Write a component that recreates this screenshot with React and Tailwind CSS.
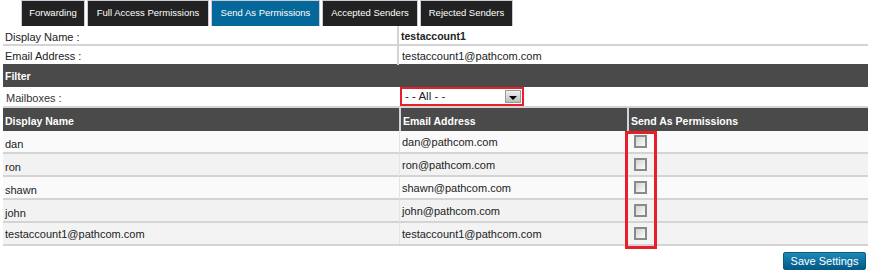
import React from "react";

const tabs = [
  { label: "Forwarding", w: "w-[64px]" },
  { label: "Full Access Permissions", w: "w-[122px]" },
  { label: "Send As Permissions", w: "w-[109px]", active: true },
  { label: "Accepted Senders", w: "w-[96px]" },
  { label: "Rejected Senders", w: "w-[93px]" },
];

const users = [
  { name: "dan", email: "dan@pathcom.com", bg: "bg-[#fafafa]" },
  { name: "ron", email: "ron@pathcom.com", bg: "bg-[#f2f2f2]" },
  { name: "shawn", email: "shawn@pathcom.com", bg: "bg-[#fafafa]" },
  { name: "john", email: "john@pathcom.com", bg: "bg-[#f2f2f2]" },
  { name: "testaccount1@pathcom.com", email: "testaccount1@pathcom.com", bg: "bg-[#f3f3f3]" },
];

const Checkbox = () => (
  <div className="w-[13px] h-[13px] border-2 border-[#8a8a8a] bg-gradient-to-br from-[#d4d4d4] to-[#fbfbfb]" />
);

export default function App() {
  return (
    <div className="w-[870px] h-[272px] bg-white font-['Liberation_Sans',Arial,sans-serif] text-[11px] text-[#222] overflow-hidden">
      {/* tabs */}
      <div className="flex gap-[2px] pl-[21px] h-[26px]">
        {tabs.map((t) => (
          <div
            key={t.label}
            className={`${t.w} h-[26px] border border-[#cfc8d6] border-b-0 flex justify-center pt-[5px] text-white text-[9.5px] ${
              t.active ? "bg-[#05689a]" : "bg-[#222222]"
            }`}
          >
            {t.label}
          </div>
        ))}
      </div>

      <div className="ml-[3px] w-[865px]">
        {/* account info */}
        <div className="grid grid-cols-[396px_1fr] h-[20px] border-b-2 border-[#d4d4d4]">
          <div className="pl-[2px] pt-[3px] border-r-2 border-[#d4d4d4]">Display Name :</div>
          <div className="pl-[2px] pt-[3px] font-bold text-[10.5px]">testaccount1</div>
        </div>
        <div className="grid grid-cols-[396px_1fr] h-[18px]">
          <div className="pl-[2px] pt-[2px] border-r-2 border-[#d4d4d4]">Email Address :</div>
          <div className="pl-[3px] pt-[2px]">testaccount1@pathcom.com</div>
        </div>

        {/* filter */}
        <div className="h-[23px] bg-[#4a4a4a] text-white font-bold text-[10.5px] pl-[2px] pt-[5px]">Filter</div>
        <div className="grid grid-cols-[396px_1fr] h-[21px] border-b-2 border-[#d4d4d4]">
          <div className="pl-[3px] pt-[3px] text-[#333]">Mailboxes :</div>
          <div className="pl-[1px]">
            <div className="w-[124px] h-[19px] border-2 border-[#e81f2a] bg-white flex items-center justify-between pl-[3px] pr-[1px]">
              <span className="text-[11.5px]">- - All - -</span>
              <div className="w-[16px] h-[13px] border border-[#999] bg-gradient-to-b from-[#f0f0f0] to-[#bdbdbd] flex items-center justify-center">
                <div className="w-0 h-0 border-l-[4px] border-r-[4px] border-t-[4px] border-l-transparent border-r-transparent border-t-black mt-[2px]" />
              </div>
            </div>
          </div>
        </div>

        {/* header */}
        <div className="grid grid-cols-[396px_228px_1fr] h-[23px] bg-[#4a4a4a] text-white font-bold text-[10.5px]">
          <div className="pl-[2px] pt-[6px]">Display Name</div>
          <div className="pl-[2px] pt-[6px] border-l-2 border-[#d4d4d4]">Email Address</div>
          <div className="pl-[2px] pt-[6px] border-l-2 border-[#d4d4d4]">Send As Permissions</div>
        </div>

        {/* rows */}
        <div className="relative">
          {users.map((u) => (
            <div
              key={u.name}
              className={`grid grid-cols-[396px_228px_1fr] h-[23px] border-b-2 border-[#d4d4d4] ${u.bg}`}
            >
              <div className={`pl-[2px] ${u.name.length > 10 ? "pt-[3px]" : "pt-[5px]"}`}>{u.name}</div>
              <div className="pl-[2px] pt-[3px] border-l border-[#e4e4e4]">{u.email}</div>
              <div className="pl-[6px] pt-[4px] border-l border-[#e4e4e4]">
                <Checkbox />
              </div>
            </div>
          ))}
          <div className="absolute left-[622px] top-0 w-[32px] h-[118px] border-[3px] border-[#e81f2a] pointer-events-none" />
        </div>

        {/* actions */}
        <div className="flex justify-end pt-[6px] pr-[2px]">
          <button className="w-[83px] h-[18px] rounded-[2px] bg-gradient-to-b from-[#1a8ab8] to-[#035a86] text-white text-[11px] leading-[16px] border border-[#0a5b82]">
            Save Settings
          </button>
        </div>
      </div>
    </div>
  );
}
